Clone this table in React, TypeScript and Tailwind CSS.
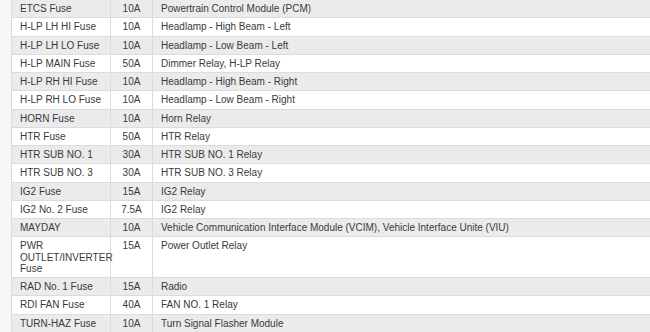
const fuses: { name: string; amp: string; circuit: string }[] = [
  { name: "ETCS Fuse", amp: "10A", circuit: "Powertrain Control Module (PCM)" },
  { name: "H-LP LH HI Fuse", amp: "10A", circuit: "Headlamp - High Beam - Left" },
  { name: "H-LP LH LO Fuse", amp: "10A", circuit: "Headlamp - Low Beam - Left" },
  { name: "H-LP MAIN Fuse", amp: "50A", circuit: "Dimmer Relay, H-LP Relay" },
  { name: "H-LP RH HI Fuse", amp: "10A", circuit: "Headlamp - High Beam - Right" },
  { name: "H-LP RH LO Fuse", amp: "10A", circuit: "Headlamp - Low Beam - Right" },
  { name: "HORN Fuse", amp: "10A", circuit: "Horn Relay" },
  { name: "HTR Fuse", amp: "50A", circuit: "HTR Relay" },
  { name: "HTR SUB NO. 1", amp: "30A", circuit: "HTR SUB NO. 1 Relay" },
  { name: "HTR SUB NO. 3", amp: "30A", circuit: "HTR SUB NO. 3 Relay" },
  { name: "IG2 Fuse", amp: "15A", circuit: "IG2 Relay" },
  { name: "IG2 No. 2 Fuse", amp: "7.5A", circuit: "IG2 Relay" },
  {
    name: "MAYDAY",
    amp: "10A",
    circuit:
      "Vehicle Communication Interface Module (VCIM), Vehicle Interface Unite (VIU)",
  },
  { name: "PWR OUTLET/INVERTER Fuse", amp: "15A", circuit: "Power Outlet Relay" },
  { name: "RAD No. 1 Fuse", amp: "15A", circuit: "Radio" },
  { name: "RDI FAN Fuse", amp: "40A", circuit: "FAN NO. 1 Relay" },
  { name: "TURN-HAZ Fuse", amp: "10A", circuit: "Turn Signal Flasher Module" },
];

export default function App() {
  return (
    <div className="h-[332px] w-full overflow-hidden bg-[#f7f7f7] pl-[11px] font-['Liberation_Sans',Arial,sans-serif] text-[10px] leading-[11.25px] text-[#3a3a3a]">
      <table className="w-[660px] table-fixed border-collapse border-l border-[#dcdcdc]">
        <colgroup>
          <col className="w-[99px]" />
          <col className="w-[42px]" />
          <col />
        </colgroup>
        <tbody>
          {fuses.map((f, i) => (
            <tr
              key={f.name}
              className={i % 2 === 0 ? "bg-[#ebebeb]" : "bg-white"}
            >
              <td className="border-b border-r border-[#dcdcdc] px-2 py-[3px] align-top">
                {f.name}
              </td>
              <td className="border-b border-r border-[#dcdcdc] py-[3px] text-center align-top">
                {f.amp}
              </td>
              <td className="border-b border-[#dcdcdc] px-2 py-[3px] align-top">
                {f.circuit}
              </td>
            </tr>
          ))}
        </tbody>
      </table>
    </div>
  );
}
